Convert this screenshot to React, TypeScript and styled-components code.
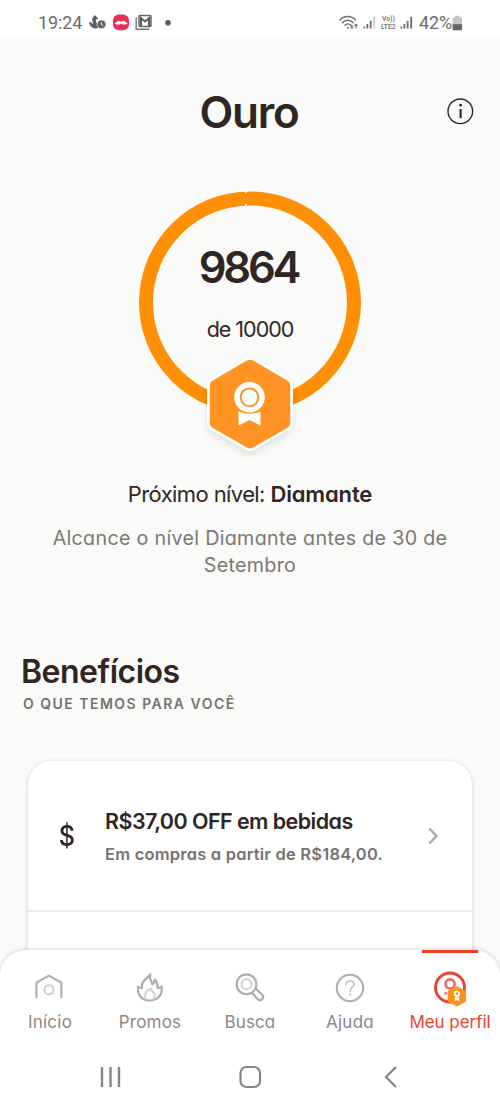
import React from 'react';
import styled, { createGlobalStyle } from 'styled-components';

const GlobalStyle = createGlobalStyle`
  * { box-sizing: border-box; }
  body {
    margin: 0;
    background: #fafaf8;
    font-family: Inter, "Liberation Sans", sans-serif;
    font-feature-settings: "cv11" 1;
  }
`;

const Screen = styled.div`
  width: 500px;
  height: 1111px;
  display: flex;
  flex-direction: column;
  overflow: hidden;
  background: #fafaf8;
  color: #2f2624;
`;

const StatusBar = styled.header`
  flex: none;
  height: 36px;
  padding: 9px 37px 0 38px;
  display: flex;
  justify-content: space-between;
  background: #fff;
  color: #6b6b6b;
  font-family: Roboto, sans-serif;
`;

const StatusGroup = styled.div`
  display: flex;
  align-items: center;
  height: 28px;
`;

const StatusText = styled.span<{ $gap?: number }>`
  margin-left: ${(p) => p.$gap ?? 0}px;
  font-size: 18px;
  line-height: 28px;
  letter-spacing: -0.1px;
`;

const LteLabel = styled.div`
  display: flex;
  flex-direction: column;
  align-items: center;
  width: 21px;
  margin: 0 1px;
  font-weight: 500;
`;

const LteLine = styled.span<{ $size: number }>`
  height: 8px;
  font-size: ${(p) => p.$size}px;
  line-height: 8px;
`;

const Main = styled.main`
  flex: 1;
  min-height: 0;
  overflow: hidden;
  display: flex;
  flex-direction: column;
`;

const TitleRow = styled.div`
  flex: none;
  display: grid;
  grid-template-columns: 1fr auto 1fr;
  align-items: center;
  height: 152px;
  padding: 0 26px;
`;

const Title = styled.h1`
  grid-column: 2;
  margin: 0;
  padding-right: 2px;
  font-size: 44px;
  line-height: 60px;
  font-weight: 600;
  letter-spacing: -1.2px;
`;

const InfoButton = styled.div`
  justify-self: end;
  display: flex;
`;

const Progress = styled.section`
  flex: none;
  position: relative;
  align-self: center;
  width: 222px;
  height: 276px;
  padding-top: 51px;
  margin-top: 3px;
  text-align: center;
`;

const ProgressRing = styled.svg`
  position: absolute;
  left: 0;
  top: 0;
  overflow: visible;
`;

const Points = styled.div`
  position: relative;
  font-size: 43.5px;
  line-height: 50px;
  font-weight: 600;
  letter-spacing: -3.2px;
  text-indent: -3px;
`;

const Goal = styled.div`
  position: relative;
  margin-top: 23px;
  font-size: 21.5px;
  line-height: 28px;
  letter-spacing: -1px;
`;

const NextLevel = styled.p`
  flex: none;
  margin: 11px 0 0;
  height: 32px;
  font-size: 22px;
  line-height: 32px;
  text-align: center;
  letter-spacing: -0.6px;
  strong { font-weight: 600; letter-spacing: -0.15px; }
`;

const Deadline = styled.p`
  flex: none;
  margin: 15px 30px 0;
  font-size: 19.7px;
  line-height: 27px;
  text-align: center;
  letter-spacing: 0.3px;
  color: #7c7876;
`;

const SectionTitle = styled.h2`
  flex: none;
  margin: 73px 0 0 21px;
  font-size: 32px;
  line-height: 40px;
  font-weight: 600;
  letter-spacing: -0.5px;
`;

const SectionCaption = styled.div`
  flex: none;
  margin: 2px 0 0 23px;
  font-size: 14px;
  line-height: 20px;
  font-weight: 600;
  letter-spacing: 1.48px;
  color: #777270;
`;

const Card = styled.section`
  flex: none;
  margin: 47px 28px 0;
  height: 260px;
  border-radius: 24px;
  background: #fff;
  box-shadow: 0 1px 5px rgba(0, 0, 0, 0.17);
`;

const Benefit = styled.div`
  display: flex;
  align-items: center;
  height: 151px;
  padding: 0 34px 0 28px;
  border-bottom: 2px solid #ebebeb;
`;

const BenefitIcon = styled.span`
  width: 22px;
  text-align: center;
  font-size: 28px;
  line-height: 40px;
  font-weight: 500;
  transform: scaleX(0.9);
`;

const BenefitText = styled.div`
  flex: 1;
  margin-left: 27px;
  padding-top: 4px;
  white-space: nowrap;
`;

const BenefitTitle = styled.div`
  font-size: 21.5px;
  line-height: 33px;
  font-weight: 600;
  letter-spacing: -0.56px;
`;

const BenefitNote = styled.div`
  font-size: 16.5px;
  line-height: 33px;
  font-weight: 600;
  letter-spacing: 0.21px;
  color: #777270;
`;

const TabBar = styled.nav`
  flex: none;
  position: relative;
  display: flex;
  height: 105px;
  margin-top: -24px;
  border-radius: 26px 26px 0 0;
  background: #fff;
  box-shadow: 0 -1px 4px rgba(0, 0, 0, 0.15);
`;

const Tab = styled.div<{ $active?: boolean }>`
  flex: 1;
  position: relative;
  display: flex;
  flex-direction: column;
  align-items: center;
  padding-top: 18px;
  color: ${(p) => (p.$active ? '#e8432f' : '#8b8886')};
  svg { display: block; overflow: visible; }
`;

const ActiveMark = styled.div`
  position: absolute;
  top: -0.5px;
  left: 22px;
  width: 56px;
  height: 3px;
  background: #ee3e23;
`;

const TabLabel = styled.span<{ $tracking: number }>`
  margin-top: 3.5px;
  font-size: 17px;
  line-height: 24px;
  white-space: nowrap;
  letter-spacing: ${(p) => p.$tracking}px;
`;

const SystemBar = styled.footer`
  flex: none;
  position: relative;
  display: flex;
  justify-content: space-between;
  height: 56px;
  padding: 10px 97px 0 99px;
  background: #fff;
`;

const Signal = ({ dim }: { dim?: boolean }) => (
  <svg width="14" height="14" viewBox="0 0 14 14" fill="#6b6b6b">
    <rect x="0.5" y="10.5" width="1.6" height="2" />
    <rect x="3.5" y="8" width="1.7" height="4.5" />
    <rect x="6.7" y="4.8" width="1.8" height="7.7" />
    <rect x="10.3" y="0.8" width="1.8" height="11.7" opacity={dim ? 0.35 : 1} />
  </svg>
);

const NotificationIcons = () => (
  <svg width="90" height="18" viewBox="0 0 90 18" style={{ marginLeft: 7 }}>
    <g fill="#5f5f5f">
      <path d="M6 1 L9 4.5 L6.8 6 C7 9 9 10 9.5 13.8 C5 15.5 1 13.5 0 8 C2 8 3.3 9 4 10.5 C4.2 8.5 3.4 7.5 3 5.5 C3.5 3.6 4.8 2.5 6 1Z" />
      <circle cx="12.5" cy="10.4" r="4.4" stroke="#fff" strokeWidth="0.7" />
      <path d="M12.300 8v2.700l2 .9" fill="none" stroke="#fff" strokeWidth="1" />
    </g>
    <rect x="24" y="0.5" width="16" height="15.8" rx="6" fill="#ec2f54" />
    <path d="M25.500 9.200c1.700-.2 2.400-2.200 4.500-2.200 1.100 0 1.700.5 2.200.9.500-.4 1.100-.9 2.200-.9 2.100 0 2.800 2 4.500 2.200-1.500 1.700-4.900 1.800-6.700.5-1.800 1.300-5.200 1.200-6.700-.5z" fill="#fff" />
    <path d="M47.200 3.500v11.800h13.200" fill="none" stroke="#777" strokeWidth="1.400" />
    <rect x="50" y="1.600" width="12" height="11" rx="1" fill="none" stroke="#666" strokeWidth="1.500" />
    <path d="M52 12V4.200L56 7.500l4-3.300V12" fill="none" stroke="#5c5c5c" strokeWidth="2.100" />
    <circle cx="79" cy="8.700" r="2.800" fill="#5f5f5f" />
  </svg>
);

const WifiIcon = () => (
  <svg width="24" height="16" viewBox="0 0 24 16" fill="none" stroke="#6b6b6b" strokeWidth="1.4" strokeLinecap="round">
    <path d="M1 5C5 .4 12.500.4 16.500 5M3.500 7.700c2.900-3.300 7.700-3.300 10.600 0M6 10.200c1.600-1.800 4.100-1.800 5.700 0" />
    <path d="M8.300 12.200l.8.8" />
    <path d="M12.900 10v3m-1.200-1 1.200 1.300 1.200-1.300M17 13V9.500M15.800 10.500l1.200-1.300L18.200 10.500" strokeWidth="1.100" />
  </svg>
);

const BatteryIcon = () => (
  <svg width="11" height="16" viewBox="0 0 11 16">
    <path d="M3 0.800h4.500v1.700H10v12.700H.7V2.500H3z" fill="#c6c6c6" />
    <rect x="0.700" y="9.200" width="9.300" height="6" fill="#666" />
  </svg>
);

const HomeIcon = () => (
  <svg width="32" height="38" viewBox="0 0 32 38" fill="none" strokeWidth="2.100">
    <path d="M2.400 30V14.700L14.900 7.700L27.400 14.700V30" stroke="#adadad" strokeLinejoin="round" />
    <circle cx="15" cy="21.700" r="4.500" stroke="#d2d2d2" strokeWidth="2.200" />
  </svg>
);

const FlameIcon = () => (
  <svg width="32" height="38" viewBox="0 0 32 38" fill="none" strokeLinejoin="round" strokeLinecap="round">
    <path d="M16.300 6.500C14.500 11.500 18 13 18.200 16.300C20 15.500 20.700 14 20.700 11.800C23.500 13.500 23.700 16.500 23.500 19.800C25.500 20 26.800 19.400 27.800 18.600C28.500 25.500 25 32.500 15.700 32.500C6.500 32.500 3.200 25.500 4 18.600C5 19.700 6.400 20.200 8 20C7 12.500 12.500 11.500 16.300 6.500Z" stroke="#adadad" strokeWidth="2.200" />
    <path d="M11.200 30.500C9.800 25.500 12.500 22.500 17.300 20.500C16.700 23 18.500 23.500 20 25C21.300 27 20.800 29 20 30.500" stroke="#d2d2d2" strokeWidth="2" />
  </svg>
);

const SearchIcon = () => (
  <svg width="32" height="38" viewBox="0 0 32 38" fill="none" strokeLinecap="round" strokeLinejoin="round">
    <circle cx="12.500" cy="16.200" r="9.900" stroke="#adadad" strokeWidth="2.200" />
    <circle cx="12.500" cy="16.200" r="5" stroke="#d2d2d2" strokeWidth="2.200" />
    <path d="M17.800 24.700L24.300 31.700C26 33.500 30.700 30.200 28.800 27.600L22.300 21" stroke="#adadad" strokeWidth="2.200" />
  </svg>
);

const HelpIcon = () => (
  <svg width="32" height="38" viewBox="0 0 32 38" fill="none" strokeLinecap="round">
    <circle cx="16" cy="20" r="13.200" stroke="#adadad" strokeWidth="2.100" />
    <path d="M12 16.400C12.200 11.700 20.300 11.900 20.100 16.500C20 19.300 16.100 19.400 16.100 23.200" stroke="#cbcbcb" strokeWidth="2" />
    <circle cx="16.100" cy="26.500" r="1.200" fill="#cbcbcb" />
  </svg>
);

const ProfileIcon = () => (
  <svg width="32" height="38" viewBox="0 0 32 38" fill="none">
    <circle cx="16" cy="19.500" r="14.500" stroke="#e8432f" strokeWidth="2.900" />
    <circle cx="16" cy="16" r="4.600" stroke="#ee6c63" strokeWidth="2.600" />
    <path d="M10.300 25.400h2.400" stroke="#ee6c63" strokeWidth="2.400" />
    <path d="M22.900 19L31.300 23.500V33L22.900 37.500L14.500 33V23.500Z" fill="#f9921e" stroke="#f9921e" strokeWidth="1.600" strokeLinejoin="round" />
    <circle cx="22.900" cy="25.800" r="2.300" stroke="#fff" strokeWidth="1.700" />
    <path d="M20.700 29.200h4.400v4l-2.200-1.200-2.200 1.200z" fill="#fff" />
  </svg>
);

const tabs = [
  { label: 'Início', Icon: HomeIcon, tracking: 0.25 },
  { label: 'Promos', Icon: FlameIcon, tracking: 0.2 },
  { label: 'Busca', Icon: SearchIcon, tracking: 0.1 },
  { label: 'Ajuda', Icon: HelpIcon, tracking: 0.25 },
  { label: 'Meu perfil', Icon: ProfileIcon, tracking: -0.05, active: true },
];

export default function App() {
  return (
    <Screen>
      <GlobalStyle />
      <StatusBar>
        <StatusGroup>
          <StatusText>19:24</StatusText>
          <NotificationIcons />
        </StatusGroup>
        <StatusGroup>
          <WifiIcon />
          <Signal dim />
          <LteLabel>
            <LteLine $size={6.8}>Vo))</LteLine>
            <LteLine $size={6.8}>LTE2</LteLine>
          </LteLabel>
          <Signal />
          <StatusText $gap={5}>42%</StatusText>
          <BatteryIcon />
        </StatusGroup>
      </StatusBar>

      <Main>
        <TitleRow>
          <Title>Ouro</Title>
          <InfoButton>
            <svg width="28" height="28" viewBox="0 0 28 28">
              <circle cx="14.300" cy="13.300" r="12.300" fill="none" stroke="#2f2624" strokeWidth="1.400" />
              <circle cx="14.600" cy="7.200" r="1.400" fill="#2f2624" />
              <path d="M14.600 11v9.200" stroke="#2f2624" strokeWidth="2.100" />
            </svg>
          </InfoButton>
        </TitleRow>

        <Progress>
          <ProgressRing width="222" height="276" viewBox="0 0 222 276">
            <defs>
              <filter id="badgeShadow" x="-30%" y="-30%" width="160%" height="160%">
                <feDropShadow dx="0" dy="4" stdDeviation="3.500" floodColor="#000" floodOpacity="0.1" />
              </filter>
            </defs>
            <circle cx="111" cy="111.500" r="104" fill="none" stroke="#ff8f05" strokeWidth="14" />
            <path d="M106.500 0l.5 1.800M107 15v-2" stroke="#fafaf8" strokeWidth="1.600" />
            <path d="M111 174.500L145.500 194.500V231.500L111 251.500L76.500 231.500V194.500Z" fill="#fff" stroke="#fff" strokeWidth="17" strokeLinejoin="round" filter="url(#badgeShadow)" />
            <path d="M111 175L145 195V231.500L111 251L77 231.500V195Z" fill="#ff9425" stroke="#ff9425" strokeWidth="12.500" strokeLinejoin="round" />
            <circle cx="110.500" cy="206.300" r="15.300" fill="#fff" />
            <circle cx="110.500" cy="206.300" r="8.900" fill="none" stroke="#ff9425" strokeWidth="2" />
            <path d="M99.500 220.500Q110.500 225 121.500 220.500V234.500L110.500 229L99.500 234.500Z" fill="#fff" />
          </ProgressRing>
          <Points>9864</Points>
          <Goal>de 10000</Goal>
        </Progress>

        <NextLevel>
          Próximo nível: <strong>Diamante</strong>
        </NextLevel>
        <Deadline>
          Alcance o nível Diamante antes de 30 de
          <br />
          Setembro
        </Deadline>

        <SectionTitle>Benefícios</SectionTitle>
        <SectionCaption>O QUE TEMOS PARA VOCÊ</SectionCaption>

        <Card>
          <Benefit>
            <BenefitIcon>$</BenefitIcon>
            <BenefitText>
              <BenefitTitle>R$37,00 OFF em bebidas</BenefitTitle>
              <BenefitNote>Em compras a partir de R$184,00.</BenefitNote>
            </BenefitText>
            <svg width="10" height="18" viewBox="0 0 10 18" fill="none" stroke="#ababab" strokeWidth="2.400">
              <path d="M1.200 1.500L8.500 9L1.200 16.500" />
            </svg>
          </Benefit>
        </Card>
      </Main>

      <TabBar>
        {tabs.map(({ label, Icon, tracking, active }) => (
          <Tab key={label} $active={active}>
            {active && <ActiveMark />}
            <Icon />
            <TabLabel $tracking={tracking}>{label}</TabLabel>
          </Tab>
        ))}
      </TabBar>

      <SystemBar>
        <svg width="24" height="24" viewBox="0 0 24 24" stroke="#858585" strokeWidth="2.400">
          <path d="M3 2v20M11.500 2v20M20 2v20" />
        </svg>
        <svg width="24" height="24" viewBox="0 0 24 24" fill="none" stroke="#858585" strokeWidth="2.200">
          <rect x="1.500" y="2" width="19.500" height="20" rx="6" />
        </svg>
        <svg width="24" height="24" viewBox="0 0 24 24" fill="none" stroke="#858585" strokeWidth="2.200">
          <path d="M17 2L7 12L17 22" />
        </svg>
      </SystemBar>
    </Screen>
  );
}
